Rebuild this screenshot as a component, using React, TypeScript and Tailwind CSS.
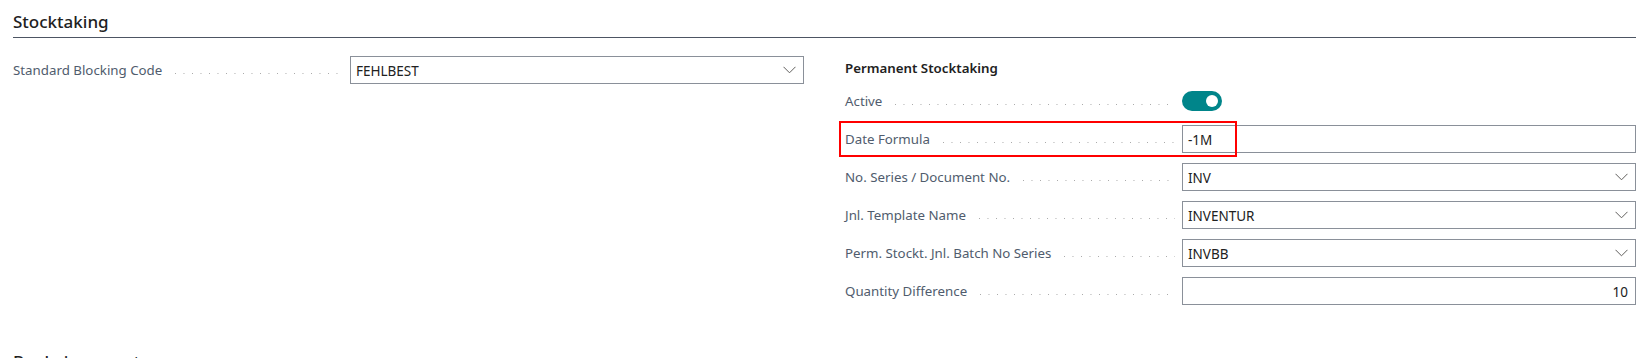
import React from "react";

const Chevron = () => (
  <svg width="13" height="8" viewBox="0 0 13 8" className="shrink-0">
    <path d="M0.5 0.8 L6.5 6.8 L12.5 0.8" fill="none" stroke="#605e5c" strokeWidth="1" />
  </svg>
);

function Leader() {
  return (
    <div className="flex-1 ml-[13px] mr-[7px] h-[1px] mt-[4px] bg-[linear-gradient(to_right,#a8a8a8_1px,transparent_1px)] bg-[length:8.5px_1px] bg-repeat-x" />
  );
}

function Label({ text }: { text: string }) {
  return (
    <div className="w-[337px] shrink-0 flex items-center pt-[2px]">
      <span className="whitespace-nowrap text-[13.3px] text-[#505c6d]">{text}</span>
      <Leader />
    </div>
  );
}

function Field({
  label,
  value,
  select,
  right,
}: {
  label: string;
  value: string;
  select?: boolean;
  right?: boolean;
}) {
  return (
    <div className="flex items-center h-[28px]">
      <Label text={label} />
      <div className="flex-1 h-[28px] border border-[#8a9099] bg-white flex items-center pl-[5px] pr-[7px]">
        <span className={`flex-1 pt-[2px] text-[13.5px] text-[#212121] ${right ? "text-right" : ""}`}>{value}</span>
        {select && <Chevron />}
      </div>
    </div>
  );
}

export default function App() {
  return (
    <div className="w-[1647px] h-[358px] overflow-hidden bg-white pl-[13px] pr-[11px] font-['Noto_Sans','Open_Sans',sans-serif]">
      <div className="pt-[9px] pb-[3px] border-b border-[#4d5563]">
        <h2 className="text-[17px] leading-[25px] text-[#212121] font-medium">Stocktaking</h2>
      </div>
      <div className="grid grid-cols-2 gap-x-[41px] mt-[18px]">
        <div className="flex flex-col">
          <Field label="Standard Blocking Code" value="FEHLBEST" select />
        </div>
        <div className="flex flex-col">
          <div className="h-[24px] pt-[2px] flex items-center text-[13.3px] font-semibold text-[#212121]">
            Permanent Stocktaking
          </div>
          <div className="flex flex-col gap-[10px] mt-[7px]">
            <div className="flex items-center h-[28px]">
              <Label text="Active" />
              <div className="w-[40px] h-[20px] rounded-full bg-[#00858a] flex items-center justify-end pr-[4px]">
                <div className="w-[12px] h-[12px] rounded-full bg-white" />
              </div>
            </div>
            <div className="relative">
              <Field label="Date Formula" value="-1M" />
              <div className="absolute left-[-6px] top-[-4px] w-[398px] h-[36px] border-2 border-[#ff0000] pointer-events-none" />
            </div>
            <Field label="No. Series / Document No." value="INV" select />
            <Field label="Jnl. Template Name" value="INVENTUR" select />
            <Field label="Perm. Stockt. Jnl. Batch No Series" value="INVBB" select />
            <Field label="Quantity Difference" value="10" right />
          </div>
        </div>
      </div>
      <div className="mt-[44px] flex items-center gap-[3px]">
        <h2 className="text-[17px] leading-[25px] text-[#212121] font-medium">Bankeinzugsart</h2>
        <span className="text-[16px] leading-[25px] text-[#212121]">›</span>
      </div>
    </div>
  );
}
